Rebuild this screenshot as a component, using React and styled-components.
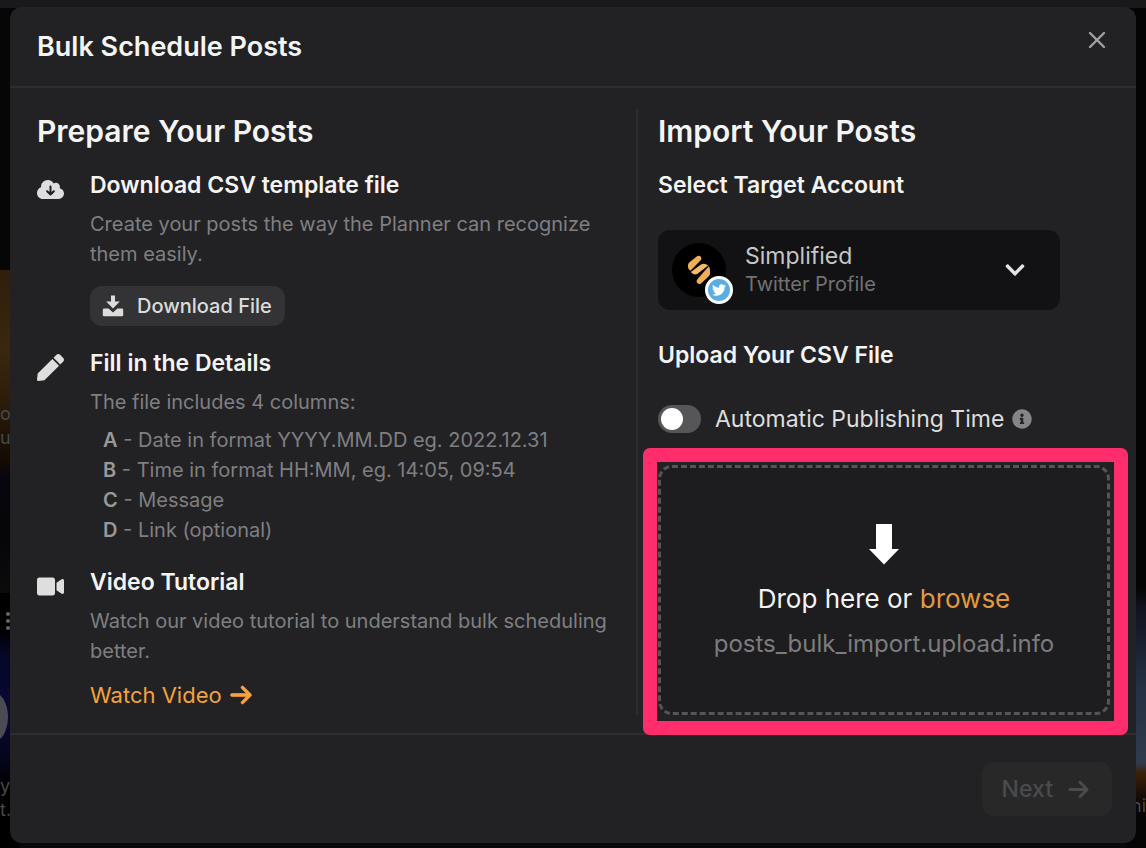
import React, { useState } from "react";
import styled, { createGlobalStyle } from "styled-components";
import { FaPen, FaVideo, FaInfoCircle, FaTwitter, FaChevronDown } from "react-icons/fa";
import { FaArrowRight, FaCloudArrowDown } from "react-icons/fa6";
import { X } from "lucide-react";

const columns = [
  { letter: "A", text: "Date in format YYYY.MM.DD eg. 2022.12.31" },
  { letter: "B", text: "Time in format HH:MM, eg. 14:05, 09:54" },
  { letter: "C", text: "Message" },
  { letter: "D", text: "Link (optional)" },
];

const DownloadIcon = () => (
  <svg width="22" height="22" viewBox="0 0 22 22" fill="currentColor" aria-hidden="true">
    <path d="M9 0.5h4v6h4.8L11 13.6 4.2 6.5H9z" />
    <path d="M2 13.6h4.6l4.4 4 4.4-4H20a1.2 1.2 0 0 1 1.2 1.2v5.2a1.2 1.2 0 0 1-1.2 1.2H2a1.2 1.2 0 0 1-1.2-1.2v-5.2A1.2 1.2 0 0 1 2 13.6z" />
  </svg>
);

const DropArrow = () => (
  <svg width="30" height="42" viewBox="0 0 30 42" fill="#fff" aria-hidden="true">
    <path d="M7 1h16v25h7L15 41.5 0 26h7z" />
  </svg>
);

const SimplifiedLogo = () => (
  <svg width="24" height="30" viewBox="0 0 24 30" fill="#f0ae58" aria-hidden="true">
    <path d="M1 10Q1 8.500 2.200 7.500L10 1.200Q12.500 0 14.200 2.200 15 4.200 13.200 5.800L3.400 15.800Q1 14.500 1 12z" />
    <path d="M3.800 17 14 9.600Q17.500 7.700 21.200 10.500L10.200 19Q6.500 20.500 3.800 17z" fill="#f5b968" />
    <path d="M23 18.500Q23 20 21.800 21.200L14 28.400Q11.500 29.800 9.800 27.600 9 25.500 10.800 23.800L21.800 11.200Q23 13 23 15.500z" />
  </svg>
);

const App = () => {
  const [autoTime, setAutoTime] = useState(false);

  return (
    <Page>
      <GlobalStyle />
      <Backdrop aria-hidden="true">
        <LeftPlanner>
          <PostText>o<br />u</PostText>
          <Dots>
            <i />
            <i />
            <i />
          </Dots>
          <Moon />
          <PostText>yo<br />t.</PostText>
        </LeftPlanner>
        <RightPlanner>
          <PostText>ni</PostText>
        </RightPlanner>
      </Backdrop>
      <Modal role="dialog" aria-labelledby="modal-title">
        <Header>
          <Title id="modal-title">Bulk Schedule Posts</Title>
          <CloseBtn type="button" aria-label="Close">
            <X size={28} strokeWidth={2} />
          </CloseBtn>
        </Header>
        <Body>
          <Prepare>
            <Heading>Prepare Your Posts</Heading>
            <Step>
              <StepIcon>
                <FaCloudArrowDown size={27} />
              </StepIcon>
              <StepContent>
                <StepTitle>Download CSV template file</StepTitle>
                <StepText>Create your posts the way the Planner can recognize them easily.</StepText>
                <DownloadBtn type="button">
                  <DownloadIcon />
                  Download File
                </DownloadBtn>
              </StepContent>
            </Step>
            <Step>
              <StepIcon>
                <FaPen size={27} />
              </StepIcon>
              <StepContent>
                <StepTitle>Fill in the Details</StepTitle>
                <StepText>The file includes 4 columns:</StepText>
                <ColumnList>
                  {columns.map((column) => (
                    <li key={column.letter}>
                      <b>{column.letter}</b> - {column.text}
                    </li>
                  ))}
                </ColumnList>
              </StepContent>
            </Step>
            <Step>
              <StepIcon>
                <FaVideo size={27} />
              </StepIcon>
              <StepContent>
                <StepTitle>Video Tutorial</StepTitle>
                <StepText>Watch our video tutorial to understand bulk scheduling better.</StepText>
                <WatchLink href="#video">
                  Watch Video
                  <FaArrowRight size={24} stroke="currentColor" strokeWidth={14} />
                </WatchLink>
              </StepContent>
            </Step>
          </Prepare>
          <Import>
            <Heading>Import Your Posts</Heading>
            <StepTitle as="label" htmlFor="account">
              Select Target Account
            </StepTitle>
            <Account>
              <Avatar>
                <SimplifiedLogo />
                <Badge>
                  <FaTwitter size={14} />
                </Badge>
              </Avatar>
              <AccountInfo>
                <AccountSelect id="account" defaultValue="simplified">
                  <option value="simplified">Simplified</option>
                </AccountSelect>
                <AccountType>Twitter Profile</AccountType>
              </AccountInfo>
              <FaChevronDown size={22} />
            </Account>
            <StepTitle>Upload Your CSV File</StepTitle>
            <SwitchRow>
              <Switch
                id="auto-time"
                type="checkbox"
                role="switch"
                checked={autoTime}
                onChange={() => setAutoTime(!autoTime)}
              />
              <label htmlFor="auto-time">Automatic Publishing Time</label>
              <FaInfoCircle size={20} />
            </SwitchRow>
            <DropZone>
              <DropArrow />
              <DropText>
                Drop here or <BrowseBtn type="button">browse</BrowseBtn>
              </DropText>
              <DropInfo>posts_bulk_import.upload.info</DropInfo>
              <Highlight />
            </DropZone>
          </Import>
        </Body>
        <Footer>
          <NextBtn type="button" disabled>
            Next
            <FaArrowRight size={23} />
          </NextBtn>
        </Footer>
      </Modal>
    </Page>
  );
};

const GlobalStyle = createGlobalStyle`
  * {
    box-sizing: border-box;
  }
  body {
    margin: 0;
    background-color: #08080a;
    font-family: Inter, "Liberation Sans", sans-serif;
  }
  h1, h2, h3, p, ul {
    margin: 0;
    padding: 0;
  }
  button, select {
    font-family: inherit;
  }
`;

const Page = styled.div`
  position: relative;
  min-height: 100vh;
  padding: 7px 10px 4px;
  overflow: hidden;
`;

const Backdrop = styled.div`
  position: absolute;
  inset: 0;
  display: flex;
  justify-content: space-between;
  border-top: 8px solid #19191b;
`;

const LeftPlanner = styled.div`
  width: 20px;
  padding-top: 394px;
  background: linear-gradient(
    #060607 262px, #2e1e0b 262px, #3b270e 340px, #2a1b09 400px,
    #120a04 455px, #06060e 470px, #060608 530px, #0b0b0c 585px,
    #000 585px, #000 620px, #07072a 650px, #080833 710px,
    #05051c 750px, #000 780px
  );
`;

const RightPlanner = styled.div`
  width: 20px;
  padding-top: 786px;
  background: linear-gradient(
    #040405 580px, #11131f 600px, #263044 680px, #303b4e 755px,
    #3a2008 765px, #1b1008 785px, #050506 800px
  );
  display: flex;
  justify-content: flex-end;
`;

const PostText = styled.p`
  font-size: 18px;
  line-height: 24px;
  color: #48484c;
`;

const Dots = styled.div`
  display: flex;
  flex-direction: column;
  gap: 3px;
  height: 40px;
  margin: 162px 0 0 6px;
  i {
    width: 4px;
    height: 4px;
    border-radius: 50%;
    background-color: #66666a;
  }
`;

const Moon = styled.div`
  width: 30px;
  height: 50px;
  margin: 40px 0 32px -22px;
  border-radius: 50%;
  background-color: #4b4b55;
`;

const Modal = styled.main`
  position: relative;
  background-color: #222224;
  border-radius: 12px;
  color: #f4f4f4;
`;

const Header = styled.header`
  display: flex;
  justify-content: space-between;
  align-items: flex-start;
  padding: 19px 25px 18px 27px;
  border-bottom: 2px solid #2e2e30;
`;

const Title = styled.h1`
  font-size: 27px;
  line-height: 42px;
  font-weight: 600;
`;

const CloseBtn = styled.button`
  display: flex;
  padding: 0;
  border: none;
  background: none;
  color: #a3a3a5;
  cursor: pointer;
`;

const Body = styled.div`
  display: flex;
  padding: 21px 26px 18px 27px;
  border-bottom: 2px solid #2e2e30;
`;

const Prepare = styled.section`
  flex: 579;
  min-width: 0;
  padding-right: 20px;
  border-right: 2px solid #2d2d2f;
`;

const Import = styled.section`
  flex: 452;
  min-width: 0;
  display: flex;
  flex-direction: column;
  padding-left: 20px;
`;

const Heading = styled.h2`
  margin-bottom: 17px;
  font-size: 30px;
  line-height: 44px;
  font-weight: 600;
`;

const Step = styled.div`
  display: flex;
  margin-bottom: 22px;
  &:last-child {
    margin-bottom: 5px;
  }
`;

const StepIcon = styled.div`
  flex: 0 0 53px;
  padding-top: 6px;
  color: #dedede;
`;

const StepContent = styled.div`
  min-width: 0;
`;

const StepTitle = styled.h3`
  font-size: 23px;
  line-height: 30px;
  font-weight: 600;
`;

const StepText = styled.p`
  margin-top: 9px;
  font-size: 20px;
  line-height: 30px;
  color: #7f7f82;
`;

const DownloadBtn = styled.button`
  display: flex;
  align-items: center;
  gap: 13px;
  height: 40px;
  margin-top: 17px;
  padding: 0 13px 0 12px;
  border: none;
  border-radius: 12px;
  background-color: #333335;
  color: #dcdcdc;
  font-size: 20px;
  font-weight: 500;
  cursor: pointer;
`;

const ColumnList = styled.ul`
  margin-top: 8px;
  padding-left: 13px;
  list-style: none;
  font-size: 20px;
  line-height: 30px;
  color: #7f7f82;
  b {
    font-weight: 600;
    color: #98989a;
  }
`;

const WatchLink = styled.a`
  display: inline-flex;
  align-items: center;
  gap: 7px;
  margin-top: 14px;
  font-size: 22px;
  line-height: 30px;
  color: #f5a13c;
  text-decoration: none;
`;

const Account = styled.div`
  display: flex;
  align-items: center;
  width: 89%;
  height: 80px;
  margin: 30px 0;
  padding: 0 34px 0 14px;
  border-radius: 12px;
  background-color: #121214;
  color: #e3e3e3;
`;

const Avatar = styled.div`
  position: relative;
  display: flex;
  justify-content: center;
  align-items: center;
  width: 54px;
  height: 54px;
  border-radius: 50%;
  background-color: #000;
`;

const Badge = styled.span`
  position: absolute;
  right: -7px;
  bottom: -7px;
  display: flex;
  justify-content: center;
  align-items: center;
  width: 28px;
  height: 28px;
  border: 3px solid #fff;
  border-radius: 50%;
  background-color: #58aee2;
  color: #fff;
`;

const AccountInfo = styled.div`
  flex: 1;
  display: flex;
  flex-direction: column;
  margin-left: 19px;
`;

const AccountSelect = styled.select`
  appearance: none;
  height: 28px;
  padding: 0;
  border: none;
  background: none;
  color: #c6c6c8;
  font-size: 23px;
  cursor: pointer;
`;

const AccountType = styled.span`
  font-size: 20px;
  line-height: 28px;
  color: #717174;
`;

const SwitchRow = styled.div`
  display: flex;
  align-items: center;
  gap: 8px;
  margin: 34px 0 31px;
  font-size: 23px;
  line-height: 30px;
  color: #dedede;
  svg {
    flex: none;
    color: #858587;
  }
`;

const Switch = styled.input`
  appearance: none;
  flex: none;
  width: 43px;
  height: 28px;
  margin: 0 6px 0 0;
  padding: 3px;
  border-radius: 14px;
  background-color: ${(props) => (props.checked ? "#f5a13c" : "#565658")};
  cursor: pointer;
  &::before {
    content: "";
    display: block;
    width: 22px;
    height: 22px;
    margin-left: ${(props) => (props.checked ? "15px" : "0")};
    border-radius: 50%;
    background-color: #fff;
  }
`;

const DropZone = styled.div`
  position: relative;
  display: flex;
  flex-direction: column;
  align-items: center;
  padding: 55px 0 53px;
  border: 3px dashed #555557;
  border-radius: 14px;
  background-color: #1d1d1f;
`;

const DropText = styled.p`
  margin-top: 18px;
  font-size: 26px;
  line-height: 32px;
`;

const BrowseBtn = styled.button`
  padding: 0;
  border: none;
  background: none;
  color: #e29a40;
  font-size: 26px;
  line-height: 32px;
  cursor: pointer;
`;

const DropInfo = styled.p`
  margin-top: 14px;
  font-size: 24px;
  line-height: 30px;
  color: #7c7c7e;
`;

// sits around the drop zone without taking any space
const Highlight = styled.div`
  position: absolute;
  inset: -20px -21px -23px -18px;
  border: 14px solid #ff2d6b;
  border-radius: 7px;
  pointer-events: none;
`;

const Footer = styled.footer`
  display: flex;
  justify-content: flex-end;
  padding: 27px 24px;
`;

const NextBtn = styled.button`
  display: flex;
  align-items: center;
  gap: 14px;
  height: 54px;
  padding: 0 22px 0 20px;
  border: none;
  border-radius: 12px;
  background-color: #282829;
  color: #4b4b4d;
  font-size: 23px;
  font-weight: 500;
`;

export default App;
